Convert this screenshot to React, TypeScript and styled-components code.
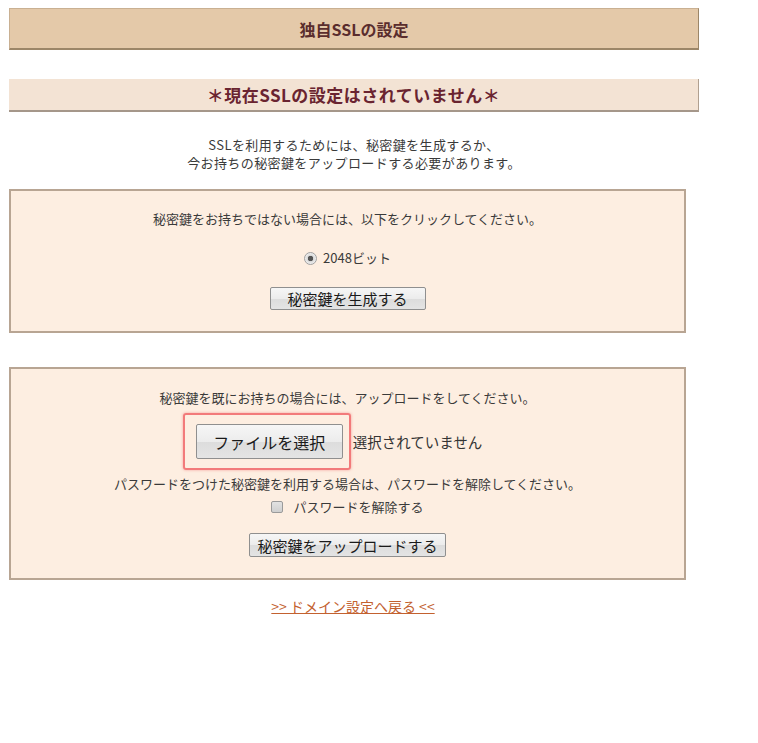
import styled, { createGlobalStyle } from "styled-components";

const GlobalStyle = createGlobalStyle`
    body {
        margin: 0;
        background: #ffffff;
        font-family: "Noto Sans CJK JP", "Liberation Sans", sans-serif;
        color: #333333;
    }
`;

const Page = styled.div`
    width: 690px;
    padding: 8px 0 40px 9px;
    display: flex;
    flex-direction: column;
`;

const TitleBar = styled.h2`
    margin: 0;
    height: 42px;
    box-sizing: border-box;
    display: flex;
    align-items: center;
    justify-content: center;
    background: #e4c9a9;
    border: 1px solid #c9b092;
    border-right-color: #9c8668;
    border-bottom: 2px solid #9c8668;
    color: #5a2d2d;
    font-size: 16px;
    font-weight: 700;
`;

const StatusBar = styled.h3`
    margin: 29px 0 0;
    height: 33px;
    box-sizing: border-box;
    display: flex;
    align-items: center;
    justify-content: center;
    background: #f3e3d4;
    border-right: 1px solid #b0a090;
    border-bottom: 2px solid #a5978a;
    color: #6a2430;
    font-size: 17px;
    font-weight: 700;
    letter-spacing: 0.5px;
`;

const Intro = styled.p`
    margin: 24px 0 0;
    text-align: center;
    font-size: 13px;
    line-height: 18px;
    letter-spacing: 0.4px;
    color: #3a3a3a;
`;

const Panel = styled.section<{ $top: number; $pad: string }>`
    width: 677px;
    box-sizing: border-box;
    margin-top: ${(p) => p.$top}px;
    padding: ${(p) => p.$pad};
    background: #fdeee1;
    border: 2px solid #b8a593;
    display: flex;
    flex-direction: column;
    align-items: center;
`;

const Line = styled.div<{ $top?: number }>`
    margin-top: ${(p) => p.$top ?? 0}px;
    font-size: 13px;
    line-height: 18px;
    color: #3a3a3a;
    display: flex;
    align-items: center;
    gap: 6px;
`;

const Radio = styled.span`
    width: 13px;
    height: 13px;
    box-sizing: border-box;
    border-radius: 50%;
    border: 1px solid #a0a0a0;
    background: radial-gradient(circle, #555 0 2.5px, #d8d8d8 3px, #f4f4f4 6px);
`;

const Check = styled.span`
    width: 12px;
    height: 12px;
    box-sizing: border-box;
    border-radius: 2px;
    border: 1px solid #9a9a9a;
    background: linear-gradient(#e2e2e2, #cfcfcf);
    margin-right: 4px;
`;

const Button = styled.button<{ $w: number; $h: number; $size: number }>`
    width: ${(p) => p.$w}px;
    height: ${(p) => p.$h}px;
    padding: 0;
    font-family: inherit;
    font-size: ${(p) => p.$size}px;
    color: #1a1a1a;
    border: 1px solid #8f8f8f;
    border-radius: 2px;
    background: linear-gradient(#f6f6f6 0%, #ececec 50%, #dcdcdc 51%, #e4e4e4 100%);
    display: flex;
    align-items: center;
    justify-content: center;
`;

const FileRow = styled.div`
    margin-top: 6px;
    margin-right: 30px;
    display: flex;
    align-items: center;
    gap: 2px;
`;

const Highlight = styled.div`
    padding: 9px 6px 9px 11px;
    border: 2px solid #f27a7a;
    border-radius: 3px;
    box-shadow: 0 0 3px rgba(240, 110, 110, 0.6);
`;

const FileStatus = styled.span`
    font-size: 14.5px;
    color: #333;
`;

const BackLink = styled.a`
    margin: 16px 0 0 253px;
    width: 182px;
    text-align: center;
    font-size: 14px;
    color: #c3612f;
    text-decoration: underline;
`;

const App = () => {
    return (
        <Page>
            <GlobalStyle />
            <TitleBar>独自SSLの設定</TitleBar>
            <StatusBar>＊現在SSLの設定はされていません＊</StatusBar>
            <Intro>
                SSLを利用するためには、秘密鍵を生成するか、
                <br />
                今お持ちの秘密鍵をアップロードする必要があります。
            </Intro>
            <Panel $top={17} $pad="19px 0 21px">
                <Line>秘密鍵をお持ちではない場合には、以下をクリックしてください。</Line>
                <Line $top={21}>
                    <Radio />
                    2048ビット
                </Line>
                <Line $top={20}>
                    <Button $w={156} $h={23} $size={15}>
                        秘密鍵を生成する
                    </Button>
                </Line>
            </Panel>
            <Panel $top={34} $pad="20px 0 21px">
                <Line>秘密鍵を既にお持ちの場合には、アップロードをしてください。</Line>
                <FileRow>
                    <Highlight>
                        <Button $w={147} $h={35} $size={16}>
                            ファイルを選択
                        </Button>
                    </Highlight>
                    <FileStatus>選択されていません</FileStatus>
                </FileRow>
                <Line $top={5}>パスワードをつけた秘密鍵を利用する場合は、パスワードを解除してください。</Line>
                <Line $top={5}>
                    <Check />
                    パスワードを解除する
                </Line>
                <Line $top={17}>
                    <Button $w={197} $h={24} $size={15}>
                        秘密鍵をアップロードする
                    </Button>
                </Line>
            </Panel>
            <BackLink href="#">&gt;&gt; ドメイン設定へ戻る &lt;&lt;</BackLink>
        </Page>
    );
};

export default App;
